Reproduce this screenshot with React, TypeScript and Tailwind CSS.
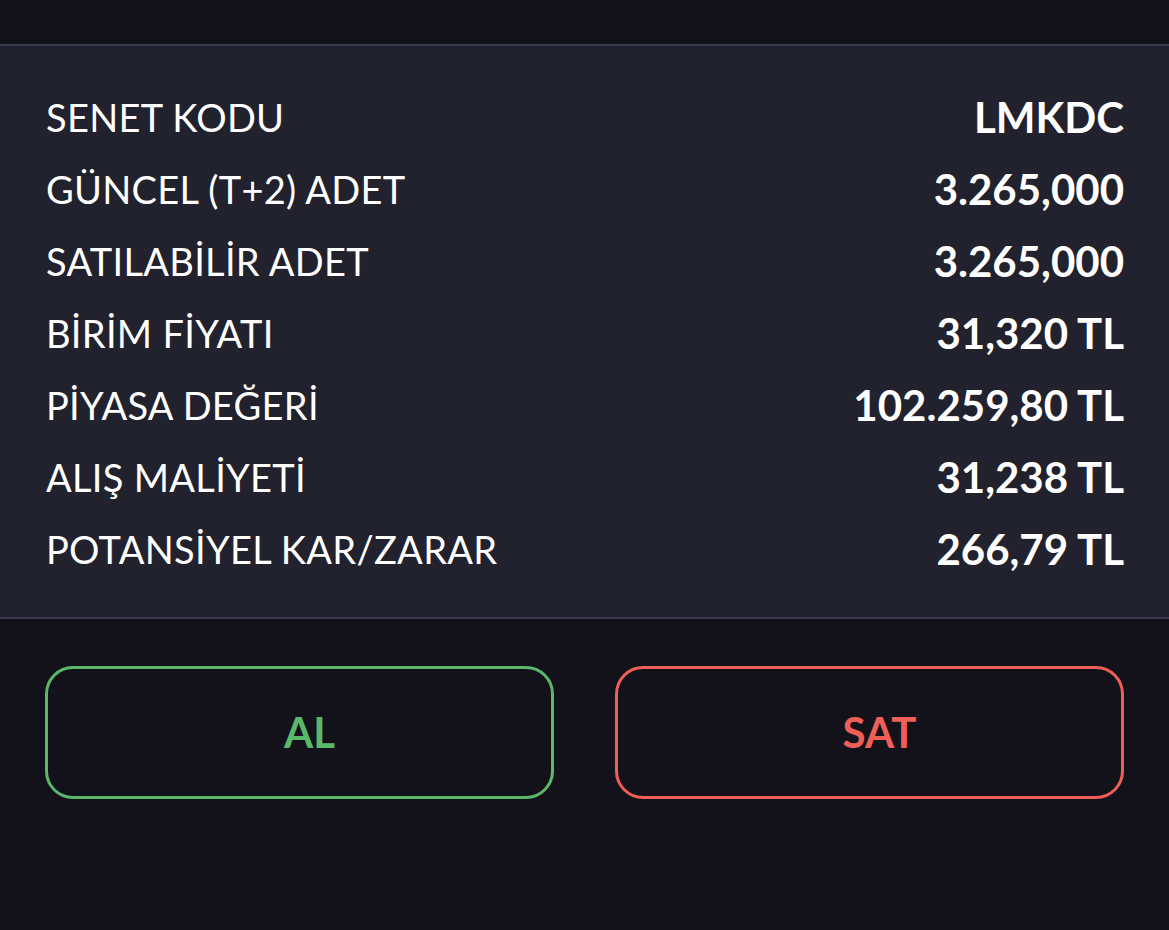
const ROWS: [string, string][] = [
  ["SENET KODU", "LMKDC"],
  ["GÜNCEL (T+2) ADET", "3.265,000"],
  ["SATILABİLİR ADET", "3.265,000"],
  ["BİRİM FİYATI", "31,320 TL"],
  ["PİYASA DEĞERİ", "102.259,80 TL"],
  ["ALIŞ MALİYETİ", "31,238 TL"],
  ["POTANSİYEL KAR/ZARAR", "266,79 TL"],
];

export default function App() {
  return (
    <div className="w-[1169px] h-[930px] bg-[#13121b] font-['Lato','Inter',sans-serif] text-white">
      <div className="h-[44px]" />
      {/* Details */}
      <div className="bg-[#21222e] border-y-2 border-[#383b4b] pl-[46px] pr-[45px] pt-[35px] pb-[32px]">
        {ROWS.map(([label, value]) => (
          <div key={label} className="h-[72px] flex items-center justify-between">
            <span className="text-[38px] tracking-[0.3px]">{label}</span>
            <span className="text-[42px] font-bold">{value}</span>
          </div>
        ))}
      </div>

      {/* Actions */}
      <div className="flex gap-[61px] px-[45px] pt-[47px]">
        <button className="flex-1 h-[133px] pl-[20px] rounded-[28px] border-[3px] border-[#5bb86a] text-[#5bb86a] text-[42px] font-bold">
          AL
        </button>
        <button className="flex-1 h-[133px] pl-[20px] rounded-[28px] border-[3px] border-[#ee5f57] text-[#ee5f57] text-[42px] font-bold">
          SAT
        </button>
      </div>
    </div>
  );
}
